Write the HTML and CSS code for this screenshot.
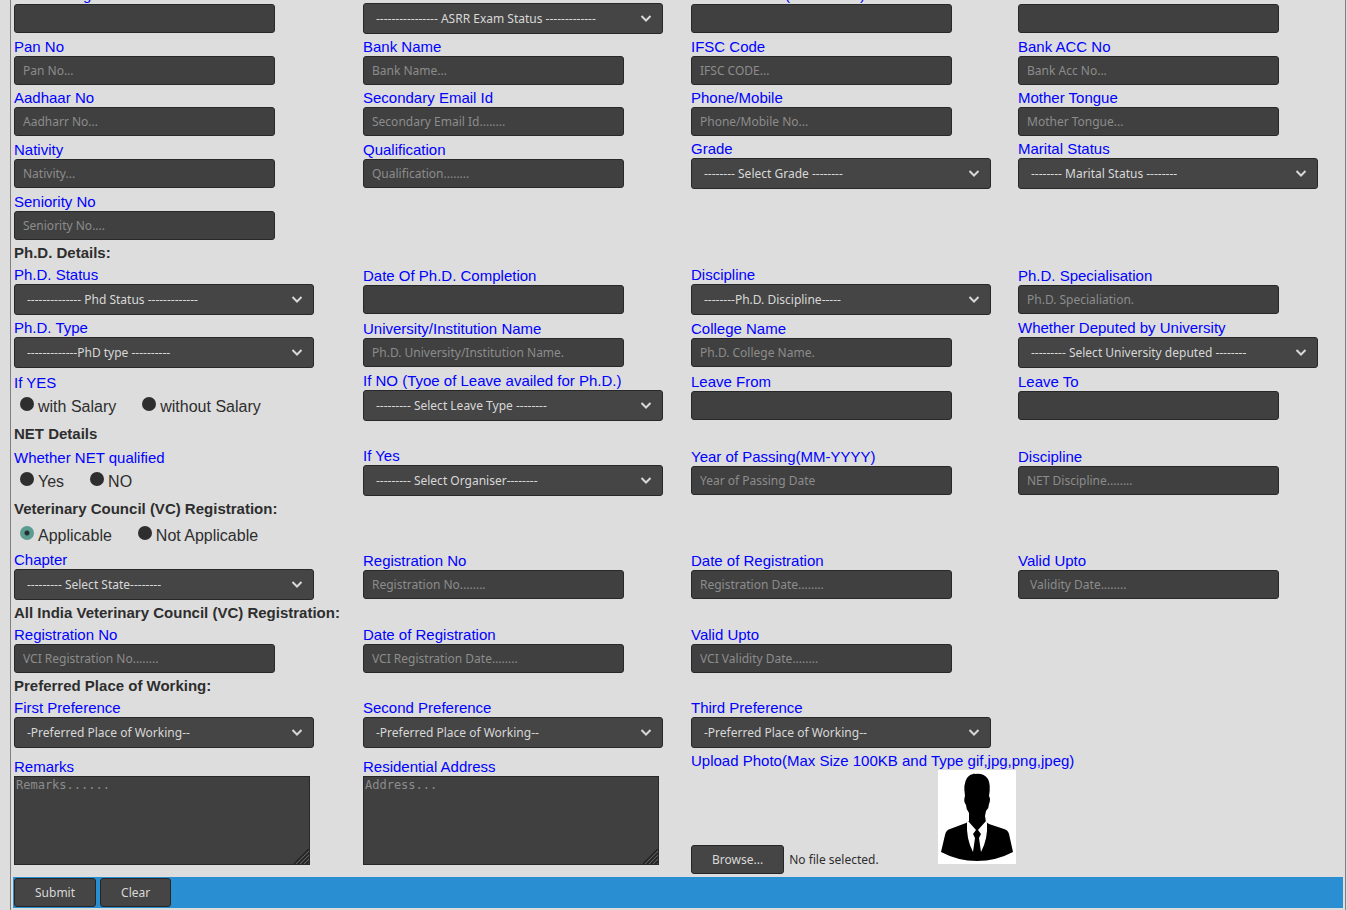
FILE: index.html
```html
<!DOCTYPE html>
<html lang="en">
<head>
<meta charset="utf-8">
<title>Staff Profile</title>
<link rel="stylesheet" href="styles.css">
</head>
<body>
<form class="profile">
  <div class="row row-first">
    <div class="cell"><label for="rating">NET Rating</label><input class="field" id="rating" type="text"></div>
    <div class="cell"><label for="asrr">ASRR Exam</label><select class="pick" id="asrr"><option>---------------- ASRR Exam Status -------------</option></select></div>
    <div class="cell"><label for="award">Date of Award(MM-YYYY)</label><input class="field" id="award" type="text"></div>
    <div class="cell"><label for="asrrdate">ASRR Date</label><input class="field" id="asrrdate" type="text"></div>
  </div>
  <div class="row">
    <div class="cell"><label for="pan">Pan No</label><input class="field" id="pan" type="text" placeholder="Pan No..."></div>
    <div class="cell"><label for="bank">Bank Name</label><input class="field" id="bank" type="text" placeholder="Bank Name..."></div>
    <div class="cell"><label for="ifsc">IFSC Code</label><input class="field" id="ifsc" type="text" placeholder="IFSC CODE..."></div>
    <div class="cell"><label for="acc">Bank ACC No</label><input class="field" id="acc" type="text" placeholder="Bank Acc No..."></div>
  </div>
  <div class="row">
    <div class="cell"><label for="aadhaar">Aadhaar No</label><input class="field" id="aadhaar" type="text" placeholder="Aadharr No..."></div>
    <div class="cell"><label for="email2">Secondary Email Id</label><input class="field" id="email2" type="text" placeholder="Secondary Email Id........"></div>
    <div class="cell"><label for="phone">Phone/Mobile</label><input class="field" id="phone" type="text" placeholder="Phone/Mobile No..."></div>
    <div class="cell"><label for="tongue">Mother Tongue</label><input class="field" id="tongue" type="text" placeholder="Mother Tongue..."></div>
  </div>
  <div class="row">
    <div class="cell"><label for="nativity">Nativity</label><input class="field" id="nativity" type="text" placeholder="Nativity..."></div>
    <div class="cell"><label for="qual">Qualification</label><input class="field" id="qual" type="text" placeholder="Qualification........"></div>
    <div class="cell"><label for="grade">Grade</label><select class="pick" id="grade"><option>-------- Select Grade --------</option></select></div>
    <div class="cell"><label for="marital">Marital Status</label><select class="pick" id="marital"><option>-------- Marital Status --------</option></select></div>
  </div>
  <div class="row">
    <div class="cell"><label for="seniority">Seniority No</label><input class="field" id="seniority" type="text" placeholder="Seniority No...."></div>
  </div>

  <h2 class="section">Ph.D. Details:</h2>
  <div class="row">
    <div class="cell"><label for="phdstatus">Ph.D. Status</label><select class="pick" id="phdstatus"><option>-------------- Phd Status -------------</option></select></div>
    <div class="cell"><label for="phddate">Date Of Ph.D. Completion</label><input class="field" id="phddate" type="text"></div>
    <div class="cell"><label for="phddisc">Discipline</label><select class="pick" id="phddisc"><option>--------Ph.D. Discipline-----</option></select></div>
    <div class="cell"><label for="phdspec">Ph.D. Specialisation</label><input class="field" id="phdspec" type="text" placeholder="Ph.D. Specialiation."></div>
  </div>
  <div class="row">
    <div class="cell"><label for="phdtype">Ph.D. Type</label><select class="pick" id="phdtype"><option>-------------PhD type ----------</option></select></div>
    <div class="cell"><label for="phduniv">University/Institution Name</label><input class="field" id="phduniv" type="text" placeholder="Ph.D. University/Institution Name."></div>
    <div class="cell"><label for="college">College Name</label><input class="field" id="college" type="text" placeholder="Ph.D. College Name."></div>
    <div class="cell"><label for="deputed">Whether Deputed by University</label><select class="pick" id="deputed"><option>--------- Select University deputed --------</option></select></div>
  </div>
  <div class="row">
    <fieldset class="cell">
      <legend>If YES</legend>
      <div class="choices">
        <label class="choice"><input type="radio" name="salary"><span>with Salary</span></label>
        <label class="choice"><input type="radio" name="salary"><span>without Salary</span></label>
      </div>
    </fieldset>
    <div class="cell"><label for="leavetype">If NO (Tyoe of Leave availed for Ph.D.)</label><select class="pick" id="leavetype"><option>--------- Select Leave Type --------</option></select></div>
    <div class="cell"><label for="leavefrom">Leave From</label><input class="field" id="leavefrom" type="text"></div>
    <div class="cell"><label for="leaveto">Leave To</label><input class="field" id="leaveto" type="text"></div>
  </div>

  <h2 class="section">NET Details</h2>
  <div class="row">
    <fieldset class="cell">
      <legend>Whether NET qualified</legend>
      <div class="choices">
        <label class="choice"><input type="radio" name="net"><span>Yes</span></label>
        <label class="choice"><input type="radio" name="net"><span>NO</span></label>
      </div>
    </fieldset>
    <div class="cell"><label for="organiser">If Yes</label><select class="pick" id="organiser"><option>--------- Select Organiser--------</option></select></div>
    <div class="cell"><label for="passing">Year of Passing(MM-YYYY)</label><input class="field" id="passing" type="text" placeholder="Year of Passing Date"></div>
    <div class="cell"><label for="netdisc">Discipline</label><input class="field" id="netdisc" type="text" placeholder="NET Discipline........"></div>
  </div>

  <h2 class="section">Veterinary Council (VC) Registration:</h2>
  <div class="choices choices-alone">
    <label class="choice"><input type="radio" name="vc" checked><span>Applicable</span></label>
    <label class="choice"><input type="radio" name="vc"><span>Not Applicable</span></label>
  </div>
  <div class="row">
    <div class="cell"><label for="chapter">Chapter</label><select class="pick" id="chapter"><option>--------- Select State--------</option></select></div>
    <div class="cell"><label for="regno">Registration No</label><input class="field" id="regno" type="text" placeholder="Registration No........"></div>
    <div class="cell"><label for="regdate">Date of Registration</label><input class="field" id="regdate" type="text" placeholder="Registration Date........"></div>
    <div class="cell"><label for="valid">Valid Upto</label><input class="field" id="valid" type="text" placeholder=" Validity Date........"></div>
  </div>

  <h2 class="section">All India Veterinary Council (VC) Registration:</h2>
  <div class="row">
    <div class="cell"><label for="vcino">Registration No</label><input class="field" id="vcino" type="text" placeholder="VCI Registration No........"></div>
    <div class="cell"><label for="vcidate">Date of Registration</label><input class="field" id="vcidate" type="text" placeholder="VCI Registration Date........"></div>
    <div class="cell"><label for="vcivalid">Valid Upto</label><input class="field" id="vcivalid" type="text" placeholder="VCI Validity Date........"></div>
  </div>

  <h2 class="section">Preferred Place of Working:</h2>
  <div class="row">
    <div class="cell"><label for="pref1">First Preference</label><select class="pick" id="pref1"><option>-Preferred Place of Working--</option></select></div>
    <div class="cell"><label for="pref2">Second Preference</label><select class="pick" id="pref2"><option>-Preferred Place of Working--</option></select></div>
    <div class="cell"><label for="pref3">Third Preference</label><select class="pick" id="pref3"><option>-Preferred Place of Working--</option></select></div>
  </div>
  <div class="row">
    <div class="cell cell-area"><label for="remarks">Remarks</label><textarea class="area" id="remarks" placeholder="Remarks......"></textarea></div>
    <div class="cell cell-area"><label for="address">Residential Address</label><textarea class="area" id="address" placeholder="Address..."></textarea></div>
    <div class="cell cell-wide">
      <label for="photo">Upload Photo(Max Size 100KB and Type gif,jpg,png,jpeg)</label>
      <div class="upload">
        <div class="file">
          <input class="file-input" id="photo" type="file">
          <label class="button" for="photo">Browse...</label>
          <span>No file selected.</span>
        </div>
        <svg class="avatar" viewBox="0 0 78 94" role="img" aria-label="Photo">
          <rect width="78" height="94" fill="#fff"/>
          <path d="M35 3 L37 4 Q46 3 50 9 Q53 15 51 26 Q53 29 51 34 Q51 38 48 41 L47 46 L48 52 L51 54 L66 59 Q70 60 71 64 L75 82 Q58 91 39 91 Q20 91 3 82 L7 65 Q8 60 12 59 L28 53 L31 51 L31 43 Q28 39 28 35 Q25 31 27 26 Q25 14 29 8 Q32 4 36 4 Z"/>
          <path d="M29 52 L30 51 L38 60 L35 64 L37 68 L35 82 Q28 69 29 52 Z M48 51 L49 53 Q50 69 43 82 L41 68 L43 64 L40 60 Z" fill="#fff"/>
        </svg>
      </div>
    </div>
  </div>
  <div class="actions">
    <button class="button" type="submit">Submit</button>
    <button class="button" type="reset">Clear</button>
  </div>
</form>
</body>
</html>
```
FILE: styles.css
```css
* { box-sizing: border-box; }

html { overflow: hidden; }

body {
  margin: 0;
  padding: 0 1px 0 10px;
  background: #ddd;
  color: #2e2e2e;
  font-family: "Liberation Sans", Arial, sans-serif;
  font-size: 16px;
}

.profile {
  min-height: 100vh;
  padding: 0 2px 2px;
  border: solid #808080;
  border-width: 0 1px;
}

.row {
  display: grid;
  grid-template-columns: 349fr 328fr 327fr 325fr;
  align-items: center;
  padding: 0 0 0 1px;
}

.row-first { margin-top: -18px; }

.cell {
  display: flex;
  flex-direction: column;
  align-items: flex-start;
  min-width: 0;
  margin: 0;
  padding: 1px 0;
  border: 0;
}

.cell-wide { grid-column: span 2; }

.cell-area { padding-bottom: 4px; }

.cell > label,
legend {
  padding: 1px 0 0;
  color: #00f;
  font-size: 15px;
  line-height: 19px;
}

legend { padding-top: 2px; }

.section {
  margin: 0;
  padding: 2px 0 0 1px;
  font-size: 15px;
  line-height: 20px;
}

.field,
.pick,
.button,
.file {
  font-family: "Noto Sans", sans-serif;
  font-size: 12px;
}

.field {
  width: 261px;
  height: 29px;
  padding: 0 8px;
  border: 1px solid #282828;
  border-radius: 3px;
  background: #404040;
  color: #d8d8d8;
}

.field::placeholder,
.area::placeholder {
  color: #8c8c8c;
  opacity: 1;
}

.pick {
  width: 300px;
  height: 31px;
  padding: 0 28px 0 12px;
  border: 1px solid #282828;
  border-radius: 3px;
  appearance: none;
  background: #454545 url("data:image/svg+xml,%3Csvg xmlns='http://www.w3.org/2000/svg' width='12' height='8'%3E%3Cpath d='M1.500 1 6 5.500l4.500-4.500' fill='none' stroke='%23d8d8d8' stroke-width='2'/%3E%3C/svg%3E") no-repeat right 10px center;
  color: #d8d8d8;
}

.area {
  width: 296px;
  height: 89px;
  padding: 1px;
  border: 1px solid #282828;
  background: #404040;
  color: #d8d8d8;
  font-family: "DejaVu Sans Mono", monospace;
  font-size: 12px;
}

.area::-webkit-resizer {
  background: url("data:image/svg+xml,%3Csvg xmlns='http://www.w3.org/2000/svg' width='15' height='15'%3E%3Cpath d='M0 15 15 0M4 15 15 4M8 15l7-7M12 15l3-3' stroke='%23222' stroke-width='1.500'/%3E%3Cpath d='M2 15 15 2M6 15 15 6M10 15l5-5' stroke='%23606060'/%3E%3C/svg%3E") no-repeat right bottom;
}

.choices {
  display: flex;
  gap: 20px;
  line-height: 24px;
}

.choices-alone {
  padding: 3px 0 0 1px;
}

.choice {
  display: flex;
  align-items: flex-start;
  gap: 4px;
  padding-left: 6px;
}

.choice span { padding-top: 2px; }

.choice input {
  width: 14px;
  height: 14px;
  margin: 4px 0 0;
  border-radius: 50%;
  appearance: none;
  background: #2e2e2e;
}

.choice input:checked {
  background: radial-gradient(circle, #262f2d 0 2px, #5a9c90 3px);
}

.upload {
  display: flex;
  align-items: flex-end;
  min-height: 104px;
}

.file {
  display: flex;
  align-items: center;
  gap: 5px;
  width: 247px;
}

.file-input {
  position: absolute;
  width: 1px;
  height: 1px;
  opacity: 0;
}

.avatar {
  width: 78px;
  margin-bottom: 10px;
}

.button {
  height: 29px;
  padding: 0 20px;
  border: 1px solid #262626;
  border-radius: 3px;
  background: #454545;
  color: #d8d8d8;
  line-height: 27px;
}

.actions {
  display: flex;
  gap: 4px;
  margin-top: 2px;
  padding: 1px;
  background: #2a8fd2;
}
```
